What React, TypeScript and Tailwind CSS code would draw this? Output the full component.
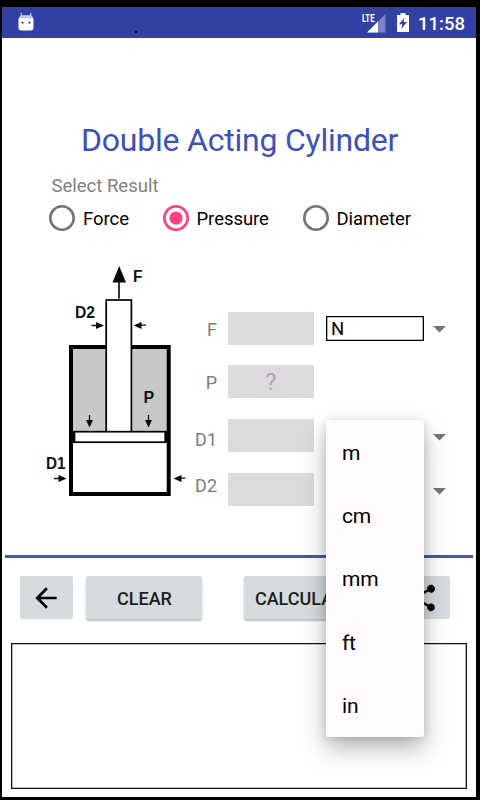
import React from "react";

function StatusBar() {
  return (
    <header className="flex h-[31px] shrink-0 items-center bg-[#3341a5] pl-4 pr-[11px] text-white">
      <svg width="16" height="20" viewBox="0 0 16 20" className="mb-px">
        <path d="M4 5 3 .8M12 5l1-4.2" stroke="#d5d8ee" strokeWidth="1" />
        <path d="M2.5 3.5h11L15.5 7v8.500a3 3 0 0 1-3 3h-9a3 3 0 0 1-3-3V7z" fill="#fff" />
        <path d="M2.5 3.5h11l1.3 3H1.2z" fill="#c5c8e5" />
        <circle cx="4.5" cy="10.7" r="1.1" fill="#3341a5" />
        <circle cx="11.4" cy="10.7" r="1.1" fill="#3341a5" />
      </svg>
      <span className="ml-[101px] mt-[19px] size-[2px] bg-black" />
      <svg width="24" height="20" viewBox="0 0 24 20" className="ml-auto">
        <path d="M23.500 1v18.500H5z" fill="#7a83c4" />
        <path d="M16 8.500v11H5z" fill="#fff" />
        <text x="0" y="9" fontSize="11" fontWeight="700" fontFamily="Roboto, sans-serif" fill="#fff" textLength="12.500" lengthAdjust="spacingAndGlyphs">LTE</text>
      </svg>
      <svg width="12" height="19" viewBox="0 0 12 19" className="ml-[11px]">
        <path d="M3.500 0h5v2H12v17H0V2h3.500z" fill="#fff" />
        <path d="M7.500 4.500 2 11.300h3.400L4.300 16 10 9H6.600z" fill="#3341a5" />
      </svg>
      <span className="ml-[9px] mt-[2px] w-[47px] whitespace-nowrap text-[18.500px] font-medium leading-5">11:58</span>
    </header>
  );
}

function Radio({ label, on = false, className }: { label: string; on?: boolean; className: string }) {
  return (
    <label className={`flex items-center gap-[8px] ${className}`}>
      <svg width="26" height="26" viewBox="0 0 26 26" className="shrink-0">
        <circle cx="13" cy="13" r="11.700" fill="none" stroke={on ? "#ff4081" : "#757575"} strokeWidth="2.600" />
        {on && <circle cx="13" cy="13" r="6.600" fill="#ff4081" />}
      </svg>
      <span className="mt-[2px] whitespace-nowrap text-[18.500px] leading-6 tracking-[-0.05px] text-black">{label}</span>
    </label>
  );
}

function CylinderDiagram() {
  return (
    <svg width="160" height="255" viewBox="40 255 160 255" className="shrink-0">
      <rect x="71" y="347" width="97.500" height="147" fill="#fff" />
      <rect x="71" y="347" width="97.500" height="85" fill="#c8c8c8" />
      <rect x="71" y="347" width="97.700" height="147" fill="none" stroke="#000" strokeWidth="4" />
      <rect x="106.200" y="300" width="25.200" height="132" fill="#fff" stroke="#000" strokeWidth="1.700" />
      <rect x="74.300" y="431.700" width="91" height="10.500" fill="#fff" stroke="#000" strokeWidth="1.700" />
      <path d="M74 431v12M166 431v12" stroke="#000" strokeWidth="2.500" />
      <g stroke="#111" strokeWidth="1.300">
        <path d="M119 280v18.500" strokeWidth="1.700" />
        <path d="M91.500 325.500H98M139 325.200h7M54 478.500h7M179 478.200h6.500M89.500 415v6M148.500 415v6" />
      </g>
      <g fill="#080808">
        <path d="M119.200 266 126 282.500H112.500z" />
        <path d="M104 325.500 96 322v7zM133.500 325.500l8-3.500v7zM66.500 478.500l-8-3.500v7zM173.500 478.500l8-3.500v7z" />
        <path d="M89.500 427.500 86 420h7zM148.500 427.500 145 420h7z" />
      </g>
      <g fill="#101018" fontFamily="'Liberation Sans', Arial, sans-serif" fontWeight="700" fontSize="16">
        <text x="133" y="281.500" textLength="9.500" lengthAdjust="spacingAndGlyphs">F</text>
        <text x="75" y="318" textLength="20" lengthAdjust="spacingAndGlyphs">D2</text>
        <text x="143.500" y="403">P</text>
        <text x="46" y="469" textLength="19.500" lengthAdjust="spacingAndGlyphs">D1</text>
      </g>
    </svg>
  );
}

function Caret({ className }: { className: string }) {
  return (
    <svg width="13" height="7" viewBox="0 0 13 7" className={`ml-auto ${className}`}>
      <path d="M0 0h13L6.500 6.500z" fill="#757575" />
    </svg>
  );
}

function Field({ label, hint, unit, caret, className, labelClass }: { label: string; hint?: string; unit?: string; caret?: string; className: string; labelClass: string }) {
  return (
    <div className={`flex h-[33px] w-[252px] items-center ${className}`}>
      <span className={`w-[23px] text-right text-[18px] leading-6 text-[#7d7d7d] ${labelClass}`}>{label}</span>
      <span className="ml-[11px] flex h-[33px] w-[86px] items-center justify-center bg-[#dddadd] pt-[3px] text-[23px] text-[#aaa7aa]">{hint}</span>
      {unit && <span className="ml-3 flex h-[25px] w-[98px] items-center pl-[5px] pt-[2px] text-[18.500px] text-black shadow-[inset_0_0_0_1.3px_#000]">{unit}</span>}
      {caret && <Caret className={caret} />}
    </div>
  );
}

const buttonBase = "flex h-[43px] shrink-0 items-center justify-center rounded-[2px] bg-[#d6dbdd] text-[18px] font-medium text-[#1c1e1f]";

function Actions() {
  return (
    <div className="flex pl-[18px] pt-[18px]">
      <button className={`${buttonBase} w-[53px]`}>
        <svg width="32" height="32" viewBox="0 0 24 24" className="-ml-px"><path d="M20 11H7.830l5.590-5.590L12 4l-8 8 8 8 1.410-1.410L7.830 13H20z" /></svg>
      </button>
      <button className={`${buttonBase} ml-[13px] w-[116px] pl-px pt-px shadow-[0_2px_2px_rgba(0,0,0,0.25)]`}>CLEAR</button>
      <button className={`${buttonBase} ml-[42px] w-[117px] pl-[3px] pt-px shadow-[0_2px_2px_rgba(0,0,0,0.25)]`}>CALCULATE</button>
      <button className={`${buttonBase} ml-[36px] w-[53px]`}>
        <svg width="32" height="32" viewBox="0 0 24 24" className="-ml-px"><path d="M18 16.080c-.76 0-1.440.3-1.960.77L8.910 12.700c.05-.23.09-.46.09-.7s-.04-.47-.09-.7l7.050-4.110c.54.5 1.250.81 2.040.81 1.660 0 3-1.340 3-3s-1.340-3-3-3-3 1.340-3 3c0 .24.04.47.09.7L8.040 9.810C7.500 9.310 6.790 9 6 9c-1.660 0-3 1.340-3 3s1.340 3 3 3c.79 0 1.500-.31 2.040-.81l7.120 4.160c-.05.21-.08.43-.08.65 0 1.610 1.310 2.920 2.920 2.920s2.920-1.310 2.920-2.920-1.310-2.920-2.920-2.920z" /></svg>
      </button>
    </div>
  );
}

function UnitMenu() {
  return (
    <ul className="absolute left-[326px] top-[420px] h-[317px] w-[98px] rounded-[2px] bg-[#fffbff] shadow-[0_12px_24px_rgba(0,0,0,0.28),0_1px_10px_rgba(0,0,0,0.14)]">
      {["m", "cm", "mm", "ft", "in"].map((unit) => (
        <li key={unit} className="flex h-[63.300px] items-center pl-4 pt-1 text-[21px] tracking-[-0.2px] text-black">{unit}</li>
      ))}
    </ul>
  );
}

export default function App() {
  return (
    <div className="relative h-[800px] w-[480px] overflow-hidden bg-black pb-[3px] pl-[2px] pr-1 pt-[7px] font-['Roboto',sans-serif]">
      <main className="flex h-[790px] flex-col bg-white">
        <StatusBar />
        <h1 className="mt-[82px] h-10 whitespace-nowrap pl-[79px] text-[32px] leading-10 tracking-[-0.22px] text-[#3f51b5]">Double Acting Cylinder</h1>
        <p className="mt-[14px] h-6 pl-[49.500px] text-[18.500px] leading-6 text-[#808080]">Select Result</p>
        <div className="mt-[7px] flex h-[26px] pl-[47px]">
          <Radio label="Force" className="w-[113.500px]" />
          <Radio label="Pressure" on className="w-[140px]" />
          <Radio label="Diameter" className="w-[120px]" />
        </div>
        <div className="mt-6 flex h-[255px] pl-[38px]">
          <CylinderDiagram />
          <div className="-ml-[6px] pt-[57px]">
            <Field label="F" unit="N" caret="mt-px" className="" labelClass="mt-[2px]" />
            <Field label="P" hint="?" className="mt-5" labelClass="mt-[2px]" />
            <Field label="D1" caret="mt-[3px]" className="mt-[21px]" labelClass="mt-[9px]" />
            <Field label="D2" caret="mt-[3px]" className="mt-[21px]" labelClass="-mt-[8px]" />
          </div>
        </div>
        <hr className="ml-[3px] mr-[3px] mt-[45px] h-[3px] shrink-0 border-0 bg-[#4558b9]" />
        <Actions />
        <section className="ml-[9px] mt-[23.500px] h-[146px] w-[456px] shrink-0 shadow-[inset_0_0_0_1.3px_#111]" />
      </main>
      <UnitMenu />
    </div>
  );
}
